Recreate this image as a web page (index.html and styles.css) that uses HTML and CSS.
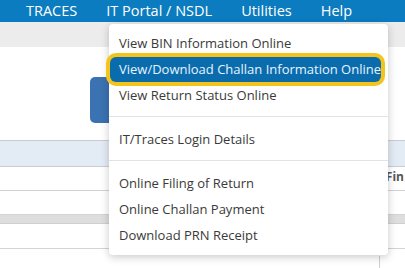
FILE: index.html
```html
<!DOCTYPE html>
<html lang="en">
<head>
    <meta charset="UTF-8">
    <title>TDS Portal</title>
    <link rel="stylesheet" href="styles.css">
</head>
<body>
    <header class="topbar">
        <nav class="nav-links">
            <a href="#" class="nav-link">TRACES</a>
            <a href="#" class="nav-link">IT Portal / NSDL</a>
            <a href="#" class="nav-link">Utilities</a>
            <a href="#" class="nav-link">Help</a>
        </nav>
    </header>
    <div class="subbar"></div>

    <div class="content">
        <div class="action-row">
            <div class="action-btn"></div>
        </div>
        <div class="grid">
            <div class="grid-row head"><span class="head-cell">Fin</span></div>
            <div class="grid-row"></div>
            <div class="grid-row"></div>
            <div class="grid-row gap"></div>
            <div class="grid-row"></div>
        </div>
        <div class="grid-foot"></div>
    </div>

    <div class="dropdown">
        <a href="#" class="drop-item">View BIN Information Online</a>
        <a href="#" class="drop-item active">View/Download Challan Information Online</a>
        <a href="#" class="drop-item">View Return Status Online</a>
        <div class="divider"></div>
        <a href="#" class="drop-item">IT/Traces Login Details</a>
        <div class="divider"></div>
        <a href="#" class="drop-item">Online Filing of Return</a>
        <a href="#" class="drop-item">Online Challan Payment</a>
        <a href="#" class="drop-item">Download PRN Receipt</a>
    </div>
</body>
</html>
```

FILE: styles.css
```css
* {
    margin: 0;
    padding: 0;
    box-sizing: border-box;
    font-family: "Open Sans", "Noto Sans", sans-serif;
}

body {
    background: #fff;
    color: #333;
    width: 405px;
    height: 268px;
    overflow: hidden;
    position: relative;
}

.topbar {
    height: 22px;
    background: #0b7cbf;
}

.nav-links {
    display: flex;
    padding-left: 26px;
    gap: 29px;
}

.nav-link {
    color: #fff;
    text-decoration: none;
    font-size: 14.5px;
    line-height: 22px;
}

.subbar {
    height: 25px;
    background: #ececec;
}

.action-row {
    height: 93px;
    padding-top: 30px;
}

.action-btn {
    margin-left: 90px;
    width: 40px;
    height: 46px;
    background: #3b72b2;
    border-radius: 5px;
}

.grid {
    border-top: 1px solid #c9cdd3;
}

.grid-row {
    height: 24px;
    border-bottom: 1px solid #d3d3d3;
}

.grid-row.head {
    height: 26px;
    background: #e3ebf5;
    border-bottom-color: #c9cdd3;
    display: flex;
    justify-content: flex-end;
    align-items: flex-end;
}

.head-cell {
    font-size: 12px;
    font-weight: 700;
    color: #555;
    white-space: nowrap;
    margin-bottom: -19px;
    padding-right: 1px;
}

.grid-row.gap {
    height: 9px;
    background: #dedede;
    border-bottom-color: #cfcfcf;
}

.grid-row:last-child {
    height: 25px;
}

.grid-foot {
    margin-left: 379px;
    height: 12px;
    border-left: 1px solid #d0d0d0;
    margin-top: 7px;
}

.dropdown {
    position: absolute;
    top: 24px;
    left: 109px;
    width: 279px;
    padding: 6px 0 7px;
    background: #fff;
    border-radius: 4px;
    box-shadow: 0 2px 8px rgba(0, 0, 0, 0.22);
    display: flex;
    flex-direction: column;
}

.drop-item {
    display: block;
    height: 26px;
    line-height: 26px;
    padding-left: 10px;
    font-size: 13px;
    color: #3a3a3a;
    text-decoration: none;
    white-space: nowrap;
}

.drop-item.active {
    margin: 1px 7px 0 1px;
    padding-left: 9px;
    height: 25px;
    line-height: 25px;
    background: #0a6cad;
    color: #e6f4ff;
    border-radius: 6px;
    box-shadow: 0 0 0 4px #f3c41c;
}

.divider {
    height: 1px;
    margin: 8px 0 9px;
    background: #e3e3e3;
}
```
